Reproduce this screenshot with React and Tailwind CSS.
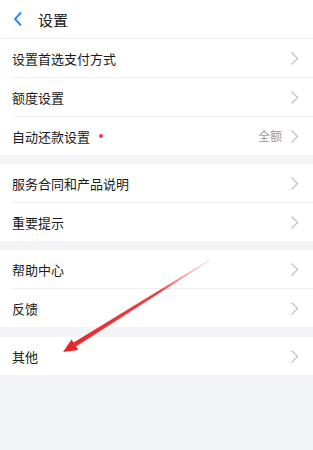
const SECTIONS = [
  [
    { label: '设置首选支付方式' },
    { label: '额度设置' },
    { label: '自动还款设置', dot: true, value: '全额' },
  ],
  [{ label: '服务合同和产品说明' }, { label: '重要提示' }],
  [{ label: '帮助中心' }, { label: '反馈' }],
  [{ label: '其他' }],
];

const GAPS = ['h-[9px]', 'h-[9px]', 'h-[10px]', 'h-0'];

function Chevron() {
  return (
    <svg width="9" height="15" viewBox="0 0 9 15" className="shrink-0">
      <polyline points="1.5,1.5 7.5,7.5 1.5,13.5" fill="none" stroke="#c4c4c4" strokeWidth="1.3" />
    </svg>
  );
}

function Row({ item }) {
  return (
    <div className="h-[38px] flex items-center pl-3 pr-[14px] bg-white">
      <span className="text-[13px] text-[#1a1a1a] leading-none">{item.label}</span>
      {item.dot && <span className="ml-[9px] w-[4px] h-[4px] rounded-full bg-[#f0364a]" />}
      <div className="flex-1" />
      {item.value && <span className="text-[12px] text-[#9a9a9a] mr-[8px] leading-none">{item.value}</span>}
      <Chevron />
    </div>
  );
}

export default function App() {
  return (
    <div
      className="relative w-[313px] h-[450px] bg-[#f3f4f8] overflow-hidden"
      style={{ fontFamily: '"Noto Sans CJK SC", "Noto Sans", sans-serif' }}
    >
      {/* Header */}
      <div className="h-[39px] bg-white border-b border-[#ececef] flex items-center pl-[13px]">
        <svg width="10" height="16" viewBox="0 0 10 16">
          <polyline points="8,1.5 2,8 8,14.5" fill="none" stroke="#2a8cf0" strokeWidth="2" />
        </svg>
        <span className="ml-[15px] text-[15px] text-[#1a1a1a] leading-none">设置</span>
      </div>

      {SECTIONS.map((rows, i) => (
        <div key={i}>
          <div className="bg-white">
            {rows.map((item, j) => (
              <div key={item.label}>
                {j > 0 && (
                  <div className="pl-3 bg-white">
                    <div className="h-px bg-[#efeff2]" />
                  </div>
                )}
                <Row item={item} />
              </div>
            ))}
          </div>
          <div className={GAPS[i]} />
        </div>
      ))}

      {/* Annotation arrow */}
      <svg className="absolute left-0 top-0 pointer-events-none" width="313" height="450">
        <defs>
          <linearGradient id="shaft" x1="210" y1="260" x2="63" y2="352" gradientUnits="userSpaceOnUse">
            <stop offset="0" stopColor="#f4a0a4" stopOpacity="0.3" />
            <stop offset="0.35" stopColor="#ec4046" />
            <stop offset="1" stopColor="#e8262a" />
          </linearGradient>
        </defs>
        <polygon points="210.3,260.4 209.7,259.6 73.6,342.6 76.0,346.4" fill="url(#shaft)" />
        <polygon points="63,352 71.5,339.5 75,344.6 78.3,350" fill="#e8262a" />
      </svg>
    </div>
  );
}
